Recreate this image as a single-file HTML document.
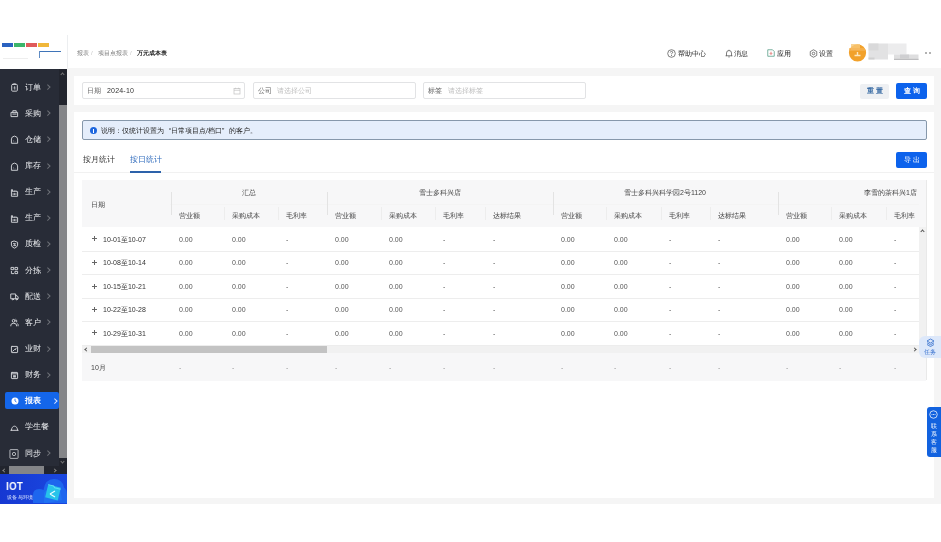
<!DOCTYPE html>
<html><head><meta charset="utf-8">
<style>
*{box-sizing:border-box;margin:0;padding:0}
html,body{width:941px;height:542px;overflow:hidden;background:#fff;font-family:"Liberation Sans",sans-serif;color:#333}
.t,.hi,.btn,.inp div{will-change:transform}
.a{position:absolute}
.t{position:absolute;white-space:nowrap;line-height:1}
#logo{left:0;top:35px;width:67px;height:33px;background:#fff}
.bar{position:absolute;top:8px;height:4px}
#hdr{left:67px;top:35px;width:874px;height:33px;background:#fff;border-left:1px solid #eceef0}
#side{left:0;top:68.5px;width:67px;height:405.5px;background:#282c37}
#main{left:67px;top:68px;width:874px;height:435.5px;background:#f5f5f5}
.card{position:absolute;background:#fff}
.inp{position:absolute;top:82px;height:16.5px;border:1px solid #e2e3e5;border-radius:2px;background:#fff}
.inp .lb{position:absolute;left:4px;top:4px;font-size:7px;color:#666;line-height:7px;white-space:nowrap}
.inp .ph{position:absolute;top:4px;font-size:7px;color:#bdbdbd;line-height:7px;white-space:nowrap}
.btn{position:absolute;border-radius:2px;font-size:7px;line-height:15px;text-align:center;letter-spacing:2px;text-indent:2px;white-space:nowrap;font-weight:bold}
.th{font-size:7px;color:#444;line-height:7px}
.td{font-size:7px;color:#555;line-height:7px}
.vl{position:absolute;width:1px;background:#e3e3e3}
.hl{position:absolute;height:1px;background:#ededed}
.hi{position:absolute;font-size:7px;line-height:7px;color:#222;white-space:nowrap}
.c{display:inline-block;width:1em;font-style:normal;text-align:center;text-indent:0;letter-spacing:0}.btn .c{margin-right:2px}
</style></head>
<body>
<!-- logo -->
<div id="logo" class="a">
  <div class="bar" style="left:2px;width:11px;background:#2a62c0"></div>
  <div class="bar" style="left:14px;width:11px;background:#3cb56a"></div>
  <div class="bar" style="left:26px;width:11px;background:#e05a5a"></div>
  <div class="bar" style="left:38px;width:11px;background:#f0b73a"></div>
  <div class="a" style="left:39px;top:16px;width:22px;height:1.3px;background:#3f74b8"></div>
  <div class="a" style="left:39px;top:16px;width:1px;height:7px;background:#5f8cc4"></div>
  <div class="a" style="left:3px;top:22.5px;width:25px;height:1px;background:#eeeeee"></div>
</div>
<!-- header -->
<div id="hdr" class="a">
  <div class="t" style="left:8.6px;top:15px;font-size:6px;color:#7a7a7a"><i class="c">报</i><i class="c">表</i></div>
  <div class="t" style="left:23px;top:15px;font-size:6px;color:#c4c4c4">/</div>
  <div class="t" style="left:29.5px;top:15px;font-size:6px;color:#7a7a7a"><i class="c">项</i><i class="c">目</i><i class="c">点</i><i class="c">报</i><i class="c">表</i></div>
  <div class="t" style="left:62px;top:15px;font-size:6px;color:#c4c4c4">/</div>
  <div class="t" style="left:68.5px;top:15px;font-size:6px;color:#1a1a1a;font-weight:bold"><i class="c">万</i><i class="c">元</i><i class="c">成</i><i class="c">本</i><i class="c">表</i></div>
  <!-- help -->
  <svg class="a" style="left:598.5px;top:13.8px" width="9" height="9" viewBox="0 0 18 18"><circle cx="9" cy="9" r="7.6" fill="none" stroke="#555" stroke-width="1.5"/><path d="M6.6 7 Q6.6 4.8 9 4.8 Q11.4 4.8 11.4 6.8 Q11.4 8.2 9.4 9 Q9 9.3 9 10.6" fill="none" stroke="#555" stroke-width="1.5"/><circle cx="9" cy="13" r="1" fill="#555"/></svg>
  <div class="hi" style="left:610px;top:14.5px"><i class="c">帮</i><i class="c">助</i><i class="c">中</i><i class="c">心</i></div>
  <svg class="a" style="left:656.5px;top:13.8px" width="8" height="9" viewBox="0 0 16 18"><path d="M3 13.5 V8 Q3 3 8 3 Q13 3 13 8 V13.5 H14.5 H1.5 Z" fill="none" stroke="#555" stroke-width="1.5" stroke-linejoin="round"/><path d="M8 1.5 V3 M6.5 15.8 H9.5" stroke="#555" stroke-width="1.5"/></svg>
  <div class="hi" style="left:666px;top:14.5px"><i class="c">消</i><i class="c">息</i></div>
  <svg class="a" style="left:698.8px;top:14px" width="8" height="8" viewBox="0 0 16 16"><path d="M1.5 1.5 H11 L14.5 5 V14.5 H1.5 Z" fill="none" stroke="#5a9f8a" stroke-width="1.6" stroke-linejoin="round"/><path d="M8 5.5 V10.5 M5.8 8.5 L8 10.8 L10.2 8.5" fill="none" stroke="#d9534f" stroke-width="1.5"/></svg>
  <div class="hi" style="left:709px;top:14.5px"><i class="c">应</i><i class="c">用</i></div>
  <svg class="a" style="left:740.5px;top:13.8px" width="9" height="9" viewBox="0 0 18 18"><path d="M9 1.5 L15.5 5.2 V12.8 L9 16.5 L2.5 12.8 V5.2 Z" fill="none" stroke="#555" stroke-width="1.5" stroke-linejoin="round"/><circle cx="9" cy="9" r="2.6" fill="none" stroke="#555" stroke-width="1.5"/></svg>
  <div class="hi" style="left:751px;top:14.5px"><i class="c">设</i><i class="c">置</i></div>
  <svg class="a" style="left:780px;top:8px" width="75" height="20" viewBox="0 0 75 20">
    <circle cx="9.5" cy="9.8" r="8.6" fill="#f2a12a"/>
    <rect x="3" y="1" width="9" height="6" fill="#f7c878" opacity=".8"/>
    <rect x="1" y="5" width="16" height="3" fill="#f5b455" opacity=".7"/>
    <path d="M6.5 12.5 H12.5 M9.5 9 V12.5" stroke="#fde7bd" stroke-width="1.4"/>
    <rect x="20.5" y="0.5" width="19.5" height="16" fill="#e2e2e3"/>
    <rect x="20.5" y="0.5" width="10" height="7" fill="#d9d9da"/>
    <rect x="40" y="0.5" width="18.5" height="11" fill="#ececed"/>
    <rect x="20.5" y="14.5" width="6" height="2" fill="#cfcfd0"/>
    <rect x="46" y="11.5" width="24.5" height="5.5" fill="#dededf"/>
    <rect x="52" y="11.5" width="9" height="4" fill="#cfcfd1"/>
    <rect x="46" y="15.8" width="24.5" height="1.2" fill="#bdbdbf"/>
  </svg>
  <div class="a" style="left:857px;top:17px;width:2px;height:2px;background:#999;border-radius:1px"></div>
  <div class="a" style="left:861px;top:17px;width:2px;height:2px;background:#999;border-radius:1px"></div>
</div>
<!-- sidebar -->
<div id="side" class="a">
  <div class="a" style="left:59px;top:0;width:8px;height:398px;background:#22252e"></div>
  <div class="a" style="left:59px;top:36.5px;width:8px;height:353px;background:#848588"></div>
  <div class="a" style="left:61px;top:4px;width:3px;height:3px;border-left:1px solid #777;border-top:1px solid #777;transform:rotate(45deg)"></div>
  <div class="a" style="left:61px;top:391px;width:3px;height:3px;border-right:1px solid #777;border-bottom:1px solid #777;transform:rotate(45deg)"></div>
  <div class="a" style="left:0;top:397.5px;width:67px;height:8px;background:#22252e"></div>
  <div class="a" style="left:9px;top:397.5px;width:35px;height:8px;background:#848588"></div>
  <div class="a" style="left:3px;top:400px;width:3px;height:3px;border-left:1px solid #888;border-bottom:1px solid #888;transform:rotate(45deg)"></div>
  <div class="a" style="left:53px;top:400px;width:3px;height:3px;border-right:1px solid #888;border-top:1px solid #888;transform:rotate(45deg)"></div>
</div>
<div class="a" style="left:0;top:68.5px;width:59px;height:397px;">
</div>
<svg class="a" style="left:9.7px;top:83.1px" width="9" height="9" viewBox="0 0 16 16"><rect x="3" y="2.5" width="10" height="12" rx="1.5" fill="none" stroke="#d2d4d8" stroke-width="1.7" stroke-linejoin="round" stroke-linecap="round"/><path d="M6 2.5 V1.5 H10 V2.5" fill="none" stroke="#d2d4d8" stroke-width="1.7" stroke-linejoin="round" stroke-linecap="round"/><path d="M7 8 L8.5 6.5 V11" fill="none" stroke="#d2d4d8" stroke-width="1.7" stroke-linejoin="round" stroke-linecap="round"/></svg>
<div class="t" style="left:25px;top:83.6px;font-size:8px;color:#ebedf0"><i class="c">订</i><i class="c">单</i></div>
<div class="a" style="left:46px;top:85.1px;width:3.5px;height:3.5px;border-right:1px solid #6e7178;border-top:1px solid #6e7178;transform:rotate(45deg)"></div>
<svg class="a" style="left:9.7px;top:109.2px" width="9" height="9" viewBox="0 0 16 16"><path d="M2.5 6 H13.5 V13.5 H2.5 Z" fill="none" stroke="#d2d4d8" stroke-width="1.7" stroke-linejoin="round" stroke-linecap="round"/><path d="M5 6 V3 H11 V6" fill="none" stroke="#d2d4d8" stroke-width="1.7" stroke-linejoin="round" stroke-linecap="round"/><path d="M5 9 H11" fill="none" stroke="#d2d4d8" stroke-width="1.7" stroke-linejoin="round" stroke-linecap="round"/></svg>
<div class="t" style="left:25px;top:109.7px;font-size:8px;color:#ebedf0"><i class="c">采</i><i class="c">购</i></div>
<div class="a" style="left:46px;top:111.2px;width:3.5px;height:3.5px;border-right:1px solid #6e7178;border-top:1px solid #6e7178;transform:rotate(45deg)"></div>
<svg class="a" style="left:9.7px;top:135.4px" width="9" height="9" viewBox="0 0 16 16"><path d="M2.5 14 V7 Q3 2.5 8 2 Q13 2.5 13.5 7 V14 Z" fill="none" stroke="#d2d4d8" stroke-width="1.7" stroke-linejoin="round" stroke-linecap="round"/><circle cx="6" cy="10" r=".6" fill="#c9ccd1"/><circle cx="6" cy="12" r=".6" fill="#c9ccd1"/><circle cx="9" cy="12" r=".6" fill="#c9ccd1"/></svg>
<div class="t" style="left:25px;top:135.9px;font-size:8px;color:#ebedf0"><i class="c">仓</i><i class="c">储</i></div>
<div class="a" style="left:46px;top:137.4px;width:3.5px;height:3.5px;border-right:1px solid #6e7178;border-top:1px solid #6e7178;transform:rotate(45deg)"></div>
<svg class="a" style="left:9.7px;top:161.5px" width="9" height="9" viewBox="0 0 16 16"><path d="M2.5 14 V7 Q3 2.5 8 2 Q13 2.5 13.5 7 V14 Z" fill="none" stroke="#d2d4d8" stroke-width="1.7" stroke-linejoin="round" stroke-linecap="round"/><circle cx="6" cy="10" r=".6" fill="#c9ccd1"/><circle cx="6" cy="12" r=".6" fill="#c9ccd1"/><circle cx="9" cy="12" r=".6" fill="#c9ccd1"/></svg>
<div class="t" style="left:25px;top:162.0px;font-size:8px;color:#ebedf0"><i class="c">库</i><i class="c">存</i></div>
<div class="a" style="left:46px;top:163.5px;width:3.5px;height:3.5px;border-right:1px solid #6e7178;border-top:1px solid #6e7178;transform:rotate(45deg)"></div>
<svg class="a" style="left:9.7px;top:187.7px" width="9" height="9" viewBox="0 0 16 16"><path d="M2.5 14 V3 H4.5 V6.5 L8 5 V6.5 L11 5 V6.5 H13.5 V14 Z" fill="none" stroke="#d2d4d8" stroke-width="1.7" stroke-linejoin="round" stroke-linecap="round"/><path d="M5.5 10 V11.5 M8 10 V11.5 M10.5 10 V11.5" fill="none" stroke="#d2d4d8" stroke-width="1.7" stroke-linejoin="round" stroke-linecap="round"/></svg>
<div class="t" style="left:25px;top:188.2px;font-size:8px;color:#ebedf0"><i class="c">生</i><i class="c">产</i></div>
<div class="a" style="left:46px;top:189.7px;width:3.5px;height:3.5px;border-right:1px solid #6e7178;border-top:1px solid #6e7178;transform:rotate(45deg)"></div>
<svg class="a" style="left:9.7px;top:213.8px" width="9" height="9" viewBox="0 0 16 16"><path d="M2.5 14 V3 H4.5 V6.5 L8 5 V6.5 L11 5 V6.5 H13.5 V14 Z" fill="none" stroke="#d2d4d8" stroke-width="1.7" stroke-linejoin="round" stroke-linecap="round"/><path d="M5.5 10 V11.5 M8 10 V11.5 M10.5 10 V11.5" fill="none" stroke="#d2d4d8" stroke-width="1.7" stroke-linejoin="round" stroke-linecap="round"/></svg>
<div class="t" style="left:25px;top:214.3px;font-size:8px;color:#ebedf0"><i class="c">生</i><i class="c">产</i></div>
<div class="a" style="left:46px;top:215.8px;width:3.5px;height:3.5px;border-right:1px solid #6e7178;border-top:1px solid #6e7178;transform:rotate(45deg)"></div>
<svg class="a" style="left:9.7px;top:239.9px" width="9" height="9" viewBox="0 0 16 16"><path d="M8 2 L13.5 4 V9 Q13 13 8 14.5 Q3 13 2.5 9 V4 Z" fill="none" stroke="#d2d4d8" stroke-width="1.7" stroke-linejoin="round" stroke-linecap="round"/><path d="M6 6.5 H10 L6.5 10 H10" fill="none" stroke="#d2d4d8" stroke-width="1.7" stroke-linejoin="round" stroke-linecap="round"/></svg>
<div class="t" style="left:25px;top:240.4px;font-size:8px;color:#ebedf0"><i class="c">质</i><i class="c">检</i></div>
<div class="a" style="left:46px;top:241.9px;width:3.5px;height:3.5px;border-right:1px solid #6e7178;border-top:1px solid #6e7178;transform:rotate(45deg)"></div>
<svg class="a" style="left:9.7px;top:266.1px" width="9" height="9" viewBox="0 0 16 16"><rect x="2.5" y="2.5" width="4" height="4" fill="none" stroke="#d2d4d8" stroke-width="1.7" stroke-linejoin="round" stroke-linecap="round"/><rect x="9.5" y="2.5" width="4" height="4" fill="none" stroke="#d2d4d8" stroke-width="1.7" stroke-linejoin="round" stroke-linecap="round"/><rect x="9.5" y="9.5" width="4" height="4" fill="none" stroke="#d2d4d8" stroke-width="1.7" stroke-linejoin="round" stroke-linecap="round"/><path d="M2.5 9.5 V13.5 H6.5" fill="none" stroke="#d2d4d8" stroke-width="1.7" stroke-linejoin="round" stroke-linecap="round"/></svg>
<div class="t" style="left:25px;top:266.6px;font-size:8px;color:#ebedf0"><i class="c">分</i><i class="c">拣</i></div>
<div class="a" style="left:46px;top:268.1px;width:3.5px;height:3.5px;border-right:1px solid #6e7178;border-top:1px solid #6e7178;transform:rotate(45deg)"></div>
<svg class="a" style="left:9.7px;top:292.2px" width="9" height="9" viewBox="0 0 16 16"><path d="M2 3.5 H10 V12 H2 Z" fill="none" stroke="#d2d4d8" stroke-width="1.7" stroke-linejoin="round" stroke-linecap="round"/><path d="M10 6.5 H12.5 L14.5 9 V12 H10" fill="none" stroke="#d2d4d8" stroke-width="1.7" stroke-linejoin="round" stroke-linecap="round"/><circle cx="5" cy="13" r="1" fill="none" stroke="#d2d4d8" stroke-width="1.7" stroke-linejoin="round" stroke-linecap="round"/><circle cx="12" cy="13" r="1" fill="none" stroke="#d2d4d8" stroke-width="1.7" stroke-linejoin="round" stroke-linecap="round"/></svg>
<div class="t" style="left:25px;top:292.7px;font-size:8px;color:#ebedf0"><i class="c">配</i><i class="c">送</i></div>
<div class="a" style="left:46px;top:294.2px;width:3.5px;height:3.5px;border-right:1px solid #6e7178;border-top:1px solid #6e7178;transform:rotate(45deg)"></div>
<svg class="a" style="left:9.7px;top:318.4px" width="9" height="9" viewBox="0 0 16 16"><circle cx="6.5" cy="5" r="2.5" fill="none" stroke="#d2d4d8" stroke-width="1.7" stroke-linejoin="round" stroke-linecap="round"/><path d="M1.5 14 V12.5 Q1.5 9.5 6.5 9.5 Q11.5 9.5 11.5 12.5 V14" fill="none" stroke="#d2d4d8" stroke-width="1.7" stroke-linejoin="round" stroke-linecap="round"/><path d="M10.5 2.5 Q13 3.5 12 7 M13.5 10 Q15 11 14.5 14" fill="none" stroke="#d2d4d8" stroke-width="1.7" stroke-linejoin="round" stroke-linecap="round"/></svg>
<div class="t" style="left:25px;top:318.9px;font-size:8px;color:#ebedf0"><i class="c">客</i><i class="c">户</i></div>
<div class="a" style="left:46px;top:320.4px;width:3.5px;height:3.5px;border-right:1px solid #6e7178;border-top:1px solid #6e7178;transform:rotate(45deg)"></div>
<svg class="a" style="left:9.7px;top:344.5px" width="9" height="9" viewBox="0 0 16 16"><rect x="2.5" y="2.5" width="11" height="11" rx="1" fill="none" stroke="#d2d4d8" stroke-width="1.7" stroke-linejoin="round" stroke-linecap="round"/><path d="M5 11 L8 8 L9 9 L11 5.5" fill="none" stroke="#d2d4d8" stroke-width="1.7" stroke-linejoin="round" stroke-linecap="round"/></svg>
<div class="t" style="left:25px;top:345.0px;font-size:8px;color:#ebedf0"><i class="c">业</i><i class="c">财</i></div>
<div class="a" style="left:46px;top:346.5px;width:3.5px;height:3.5px;border-right:1px solid #6e7178;border-top:1px solid #6e7178;transform:rotate(45deg)"></div>
<svg class="a" style="left:9.7px;top:370.6px" width="9" height="9" viewBox="0 0 16 16"><rect x="2.5" y="2.5" width="11" height="11" rx="1" fill="none" stroke="#d2d4d8" stroke-width="1.7" stroke-linejoin="round" stroke-linecap="round"/><path d="M2.5 5 H13.5" fill="none" stroke="#d2d4d8" stroke-width="1.7" stroke-linejoin="round" stroke-linecap="round"/><rect x="5.5" y="7.5" width="5" height="4" fill="#c9ccd1"/></svg>
<div class="t" style="left:25px;top:371.1px;font-size:8px;color:#ebedf0"><i class="c">财</i><i class="c">务</i></div>
<div class="a" style="left:46px;top:372.6px;width:3.5px;height:3.5px;border-right:1px solid #6e7178;border-top:1px solid #6e7178;transform:rotate(45deg)"></div>
<div class="a" style="left:4.5px;top:392.3px;width:54.5px;height:17px;background:#1466ea;border-radius:2px"></div>
<svg class="a" style="left:11px;top:397.3px" width="8" height="8" viewBox="0 0 16 16"><circle cx="8" cy="8" r="7" fill="#fff"/><path d="M8 3.5 V8 L11 10" stroke="#1466ea" stroke-width="1.6" fill="none"/></svg>
<div class="t" style="left:25px;top:397.3px;font-size:8px;color:#fff;font-weight:bold"><i class="c">报</i><i class="c">表</i></div>
<div class="a" style="left:53px;top:399.3px;width:3.5px;height:3.5px;border-right:1px solid #dfe8ff;border-top:1px solid #dfe8ff;transform:rotate(45deg)"></div>
<svg class="a" style="left:9.7px;top:422.9px" width="9" height="9" viewBox="0 0 16 16"><path d="M1.5 13 H14.5" fill="none" stroke="#d2d4d8" stroke-width="1.7" stroke-linejoin="round" stroke-linecap="round"/><path d="M2.5 13 C2.5 3, 13.5 3, 13.5 13" fill="none" stroke="#d2d4d8" stroke-width="1.7" stroke-linejoin="round" stroke-linecap="round"/></svg>
<div class="t" style="left:25px;top:423.4px;font-size:8px;color:#ebedf0"><i class="c">学</i><i class="c">生</i><i class="c">餐</i></div>
<svg class="a" style="left:9.2px;top:448.6px" width="10" height="10" viewBox="0 0 16 16"><rect x="1.5" y="1" width="13" height="14" rx=".8" fill="none" stroke="#d2d4d8" stroke-width="1.3"/><circle cx="8" cy="8" r="2.6" fill="none" stroke="#d2d4d8" stroke-width="1.3"/></svg>
<div class="t" style="left:25px;top:449.6px;font-size:8px;color:#ebedf0"><i class="c">同</i><i class="c">步</i></div>
<div class="a" style="left:46px;top:451.1px;width:3.5px;height:3.5px;border-right:1px solid #6e7178;border-top:1px solid #6e7178;transform:rotate(45deg)"></div>
<!-- IOT banner -->
<div class="a" style="left:0;top:474px;width:67px;height:29.5px;background:linear-gradient(90deg,#1638d2,#1a48e0);overflow:hidden">
  <svg class="a" style="left:0;top:0" width="67" height="29" viewBox="0 0 67 29">
    <path d="M33 29 V21 Q33 15 39 15 Q41.5 15 43.5 16 Q45 5 54 5 Q62.5 5 64 13.5 Q67 15.5 67 21 V29 Z" fill="#1e66ee"/>
    <path d="M44 19 Q46 15 50 16 L60 14 L62 26 L47 29 L44 29 Z" fill="#1f72f2"/>
    <g transform="rotate(14 53 18.5)"><rect x="46.5" y="12" width="13" height="13" fill="#27c3ea"/><path d="M46.5 12 H52 L53.5 13.5 H59.5" stroke="#5fe0f5" stroke-width="1" fill="none"/></g>
    <path d="M50 20 L55 17 M50 20 L55 23" stroke="#e8fbff" stroke-width="1.2"/>
  </svg>
  <div class="t" style="left:5.5px;top:7px;font-size:10.8px;font-weight:bold;color:#fff;letter-spacing:.2px;transform:scaleX(.92);transform-origin:0 0">IOT</div>
  <div class="t" style="left:6.5px;top:21px;font-size:5.3px;color:#dfe9ff"><i class="c">设</i><i class="c">备</i><i class="c">与</i><i class="c">环</i><i class="c">境</i></div>
</div>
<!-- main -->
<div id="main" class="a"></div>
<div class="card" style="left:74px;top:75.5px;width:860px;height:29px"></div>
<div class="card" style="left:74px;top:112px;width:860px;height:386px"></div>
<!-- filter inputs -->
<div class="inp" style="left:82px;width:163px">
  <div class="lb"><i class="c">日</i><i class="c">期</i></div>
  <div class="lb" style="left:23.5px;color:#333;letter-spacing:.2px">2024-10</div>
  <svg class="a" style="left:149.5px;top:3.5px" width="8" height="8" viewBox="0 0 16 16"><rect x="2" y="3" width="12" height="11" fill="none" stroke="#c4c4c4" stroke-width="1.5"/><path d="M2 6.5 H14 M5 1.5 V4 M11 1.5 V4" stroke="#c4c4c4" stroke-width="1.5"/></svg>
</div>
<div class="inp" style="left:252.5px;width:163px">
  <div class="lb"><i class="c">公</i><i class="c">司</i></div>
  <div class="ph" style="left:23px"><i class="c">请</i><i class="c">选</i><i class="c">择</i><i class="c">公</i><i class="c">司</i></div>
</div>
<div class="inp" style="left:422.5px;width:163px">
  <div class="lb"><i class="c">标</i><i class="c">签</i></div>
  <div class="ph" style="left:24px"><i class="c">请</i><i class="c">选</i><i class="c">择</i><i class="c">标</i><i class="c">签</i></div>
</div>
<div class="btn" style="left:859.5px;top:83.5px;width:29px;height:14.5px;background:#eef0f3;color:#3d6ea6;line-height:14.5px"><i class="c">重</i><i class="c">置</i></div>
<div class="btn" style="left:895.5px;top:82.5px;width:31px;height:15.5px;background:#0c62ec;color:#fff;line-height:15.5px"><i class="c">查</i><i class="c">询</i></div>
<!-- alert -->
<div class="a" style="left:82px;top:120px;width:845px;height:20px;background:#e5eefb;border:1px solid #8698ab;border-radius:2px"></div>
<div class="a" style="left:89.5px;top:127px;width:7px;height:7px;border-radius:50%;background:#1d66dd"></div>
<div class="a" style="left:92.5px;top:128.5px;width:1px;height:4px;background:#fff"></div>
<div class="t" style="left:100.5px;top:126.5px;font-size:7px;color:#222"><i class="c">说</i><i class="c">明</i><i class="c">：</i><i class="c">仅</i><i class="c">统</i><i class="c">计</i><i class="c">设</i><i class="c">置</i><i class="c">为</i><span style="display:inline-block;width:7px;text-align:right">“</span><i class="c">日</i><i class="c">常</i><i class="c">项</i><i class="c">目</i><i class="c">点</i>/<i class="c">档</i><i class="c">口</i><span style="display:inline-block;width:7px">”</span><i class="c">的</i><i class="c">客</i><i class="c">户</i><i class="c">。</i></div>
<!-- tabs -->
<div class="t" style="left:82.5px;top:156px;font-size:8px;color:#333"><i class="c">按</i><i class="c">月</i><i class="c">统</i><i class="c">计</i></div>
<div class="t" style="left:129.5px;top:156px;font-size:8px;color:#2f6bbd"><i class="c">按</i><i class="c">日</i><i class="c">统</i><i class="c">计</i></div>
<div class="a" style="left:74px;top:172px;width:860px;height:1px;background:#f1f1f1"></div>
<div class="a" style="left:129.5px;top:170.5px;width:31px;height:2px;background:#2d62aa"></div>
<div class="btn" style="left:896px;top:152px;width:31px;height:15.5px;background:#0c62ec;color:#fff;line-height:15.5px;font-weight:normal"><i class="c">导</i><i class="c">出</i></div>
<!-- table -->
<div class="a" style="left:82px;top:180px;width:845px;height:47px;background:#f7f7f8"></div>
<div class="a" style="left:170px;top:203.5px;width:749px;height:1px;background:#f4f4f4"></div>
<div class="t th" style="left:90.5px;top:200.5px"><i class="c">日</i><i class="c">期</i></div>
<div class="a" style="left:919px;top:227px;width:8px;height:118px;background:#f1f1f1"></div>
<div class="a" style="left:921px;top:230px;width:3px;height:3px;border-left:1px solid #555;border-top:1px solid #555;transform:rotate(45deg)"></div>
<div class="a" style="left:925.5px;top:180px;width:1px;height:200px;background:#e9e9e9"></div>
<!-- hscroll -->
<div class="a" style="left:82px;top:345px;width:845px;height:8px;background:#f1f1f1"></div>
<div class="a" style="left:90.5px;top:345px;width:236px;height:8px;background:#c3c3c3"></div>
<div class="a" style="left:85px;top:347.5px;width:3px;height:3px;border-left:1px solid #555;border-bottom:1px solid #555;transform:rotate(45deg)"></div>
<div class="a" style="left:913px;top:347.5px;width:3px;height:3px;border-right:1px solid #555;border-top:1px solid #555;transform:rotate(45deg)"></div>
<!-- summary -->
<div class="a" style="left:82px;top:353px;width:844px;height:27.5px;background:#f7f7f8"></div>
<div class="t td" style="left:90.5px;top:363.5px;color:#444">10<i class="c">月</i></div>
<div class="vl" style="left:170.6px;top:192px;height:23px"></div>
<div class="t th" style="left:148.7px;width:200px;text-align:center;top:188.5px"><i class="c">汇</i><i class="c">总</i></div>
<div class="t th" style="left:178.6px;top:212px"><i class="c">营</i><i class="c">业</i><i class="c">额</i></div>
<div class="t td" style="left:178.6px;top:235.5px">0.00</div>
<div class="t td" style="left:178.6px;top:259.0px">0.00</div>
<div class="t td" style="left:178.6px;top:282.5px">0.00</div>
<div class="t td" style="left:178.6px;top:306.0px">0.00</div>
<div class="t td" style="left:178.6px;top:329.5px">0.00</div>
<div class="t td" style="left:178.6px;top:363.5px;color:#999">-</div>
<div class="t th" style="left:232.3px;top:212px"><i class="c">采</i><i class="c">购</i><i class="c">成</i><i class="c">本</i></div>
<div class="vl" style="left:224.3px;top:207px;height:13px;background:#ededed"></div>
<div class="t td" style="left:232.3px;top:235.5px">0.00</div>
<div class="t td" style="left:232.3px;top:259.0px">0.00</div>
<div class="t td" style="left:232.3px;top:282.5px">0.00</div>
<div class="t td" style="left:232.3px;top:306.0px">0.00</div>
<div class="t td" style="left:232.3px;top:329.5px">0.00</div>
<div class="t td" style="left:232.3px;top:363.5px;color:#999">-</div>
<div class="t th" style="left:286.3px;top:212px"><i class="c">毛</i><i class="c">利</i><i class="c">率</i></div>
<div class="vl" style="left:278.3px;top:207px;height:13px;background:#ededed"></div>
<div class="t td" style="left:286.3px;top:235.5px">-</div>
<div class="t td" style="left:286.3px;top:259.0px">-</div>
<div class="t td" style="left:286.3px;top:282.5px">-</div>
<div class="t td" style="left:286.3px;top:306.0px">-</div>
<div class="t td" style="left:286.3px;top:329.5px">-</div>
<div class="t td" style="left:286.3px;top:363.5px;color:#999">-</div>
<div class="vl" style="left:327.3px;top:192px;height:23px"></div>
<div class="t th" style="left:340.0px;width:200px;text-align:center;top:188.5px"><i class="c">雪</i><i class="c">士</i><i class="c">多</i><i class="c">科</i><i class="c">兴</i><i class="c">店</i></div>
<div class="t th" style="left:334.8px;top:212px"><i class="c">营</i><i class="c">业</i><i class="c">额</i></div>
<div class="t td" style="left:334.8px;top:235.5px">0.00</div>
<div class="t td" style="left:334.8px;top:259.0px">0.00</div>
<div class="t td" style="left:334.8px;top:282.5px">0.00</div>
<div class="t td" style="left:334.8px;top:306.0px">0.00</div>
<div class="t td" style="left:334.8px;top:329.5px">0.00</div>
<div class="t td" style="left:334.8px;top:363.5px;color:#999">-</div>
<div class="t th" style="left:389.0px;top:212px"><i class="c">采</i><i class="c">购</i><i class="c">成</i><i class="c">本</i></div>
<div class="vl" style="left:381.0px;top:207px;height:13px;background:#ededed"></div>
<div class="t td" style="left:389.0px;top:235.5px">0.00</div>
<div class="t td" style="left:389.0px;top:259.0px">0.00</div>
<div class="t td" style="left:389.0px;top:282.5px">0.00</div>
<div class="t td" style="left:389.0px;top:306.0px">0.00</div>
<div class="t td" style="left:389.0px;top:329.5px">0.00</div>
<div class="t td" style="left:389.0px;top:363.5px;color:#999">-</div>
<div class="t th" style="left:443.0px;top:212px"><i class="c">毛</i><i class="c">利</i><i class="c">率</i></div>
<div class="vl" style="left:435.0px;top:207px;height:13px;background:#ededed"></div>
<div class="t td" style="left:443.0px;top:235.5px">-</div>
<div class="t td" style="left:443.0px;top:259.0px">-</div>
<div class="t td" style="left:443.0px;top:282.5px">-</div>
<div class="t td" style="left:443.0px;top:306.0px">-</div>
<div class="t td" style="left:443.0px;top:329.5px">-</div>
<div class="t td" style="left:443.0px;top:363.5px;color:#999">-</div>
<div class="t th" style="left:493.0px;top:212px"><i class="c">达</i><i class="c">标</i><i class="c">结</i><i class="c">果</i></div>
<div class="vl" style="left:485.0px;top:207px;height:13px;background:#ededed"></div>
<div class="t td" style="left:493.0px;top:235.5px">-</div>
<div class="t td" style="left:493.0px;top:259.0px">-</div>
<div class="t td" style="left:493.0px;top:282.5px">-</div>
<div class="t td" style="left:493.0px;top:306.0px">-</div>
<div class="t td" style="left:493.0px;top:329.5px">-</div>
<div class="t td" style="left:493.0px;top:363.5px;color:#999">-</div>
<div class="vl" style="left:552.8px;top:192px;height:23px"></div>
<div class="t th" style="left:565.0px;width:200px;text-align:center;top:188.5px"><i class="c">雪</i><i class="c">士</i><i class="c">多</i><i class="c">科</i><i class="c">兴</i><i class="c">科</i><i class="c">学</i><i class="c">园</i>2<i class="c">号</i>1120</div>
<div class="t th" style="left:560.5px;top:212px"><i class="c">营</i><i class="c">业</i><i class="c">额</i></div>
<div class="t td" style="left:560.5px;top:235.5px">0.00</div>
<div class="t td" style="left:560.5px;top:259.0px">0.00</div>
<div class="t td" style="left:560.5px;top:282.5px">0.00</div>
<div class="t td" style="left:560.5px;top:306.0px">0.00</div>
<div class="t td" style="left:560.5px;top:329.5px">0.00</div>
<div class="t td" style="left:560.5px;top:363.5px;color:#999">-</div>
<div class="t th" style="left:614.0px;top:212px"><i class="c">采</i><i class="c">购</i><i class="c">成</i><i class="c">本</i></div>
<div class="vl" style="left:606.0px;top:207px;height:13px;background:#ededed"></div>
<div class="t td" style="left:614.0px;top:235.5px">0.00</div>
<div class="t td" style="left:614.0px;top:259.0px">0.00</div>
<div class="t td" style="left:614.0px;top:282.5px">0.00</div>
<div class="t td" style="left:614.0px;top:306.0px">0.00</div>
<div class="t td" style="left:614.0px;top:329.5px">0.00</div>
<div class="t td" style="left:614.0px;top:363.5px;color:#999">-</div>
<div class="t th" style="left:669.0px;top:212px"><i class="c">毛</i><i class="c">利</i><i class="c">率</i></div>
<div class="vl" style="left:661.0px;top:207px;height:13px;background:#ededed"></div>
<div class="t td" style="left:669.0px;top:235.5px">-</div>
<div class="t td" style="left:669.0px;top:259.0px">-</div>
<div class="t td" style="left:669.0px;top:282.5px">-</div>
<div class="t td" style="left:669.0px;top:306.0px">-</div>
<div class="t td" style="left:669.0px;top:329.5px">-</div>
<div class="t td" style="left:669.0px;top:363.5px;color:#999">-</div>
<div class="t th" style="left:718.0px;top:212px"><i class="c">达</i><i class="c">标</i><i class="c">结</i><i class="c">果</i></div>
<div class="vl" style="left:710.0px;top:207px;height:13px;background:#ededed"></div>
<div class="t td" style="left:718.0px;top:235.5px">-</div>
<div class="t td" style="left:718.0px;top:259.0px">-</div>
<div class="t td" style="left:718.0px;top:282.5px">-</div>
<div class="t td" style="left:718.0px;top:306.0px">-</div>
<div class="t td" style="left:718.0px;top:329.5px">-</div>
<div class="t td" style="left:718.0px;top:363.5px;color:#999">-</div>
<div class="vl" style="left:778.4px;top:192px;height:23px"></div>
<div class="t th" style="left:716.7px;width:200px;text-align:right;top:188.5px"><i class="c">李</i><i class="c">雪</i><i class="c">的</i><i class="c">茶</i><i class="c">科</i><i class="c">兴</i>1<i class="c">店</i></div>
<div class="t th" style="left:785.5px;top:212px"><i class="c">营</i><i class="c">业</i><i class="c">额</i></div>
<div class="t td" style="left:785.5px;top:235.5px">0.00</div>
<div class="t td" style="left:785.5px;top:259.0px">0.00</div>
<div class="t td" style="left:785.5px;top:282.5px">0.00</div>
<div class="t td" style="left:785.5px;top:306.0px">0.00</div>
<div class="t td" style="left:785.5px;top:329.5px">0.00</div>
<div class="t td" style="left:785.5px;top:363.5px;color:#999">-</div>
<div class="t th" style="left:839.0px;top:212px"><i class="c">采</i><i class="c">购</i><i class="c">成</i><i class="c">本</i></div>
<div class="vl" style="left:831.0px;top:207px;height:13px;background:#ededed"></div>
<div class="t td" style="left:839.0px;top:235.5px">0.00</div>
<div class="t td" style="left:839.0px;top:259.0px">0.00</div>
<div class="t td" style="left:839.0px;top:282.5px">0.00</div>
<div class="t td" style="left:839.0px;top:306.0px">0.00</div>
<div class="t td" style="left:839.0px;top:329.5px">0.00</div>
<div class="t td" style="left:839.0px;top:363.5px;color:#999">-</div>
<div class="t th" style="left:894.0px;top:212px"><i class="c">毛</i><i class="c">利</i><i class="c">率</i></div>
<div class="vl" style="left:886.0px;top:207px;height:13px;background:#ededed"></div>
<div class="t td" style="left:894.0px;top:235.5px">-</div>
<div class="t td" style="left:894.0px;top:259.0px">-</div>
<div class="t td" style="left:894.0px;top:282.5px">-</div>
<div class="t td" style="left:894.0px;top:306.0px">-</div>
<div class="t td" style="left:894.0px;top:329.5px">-</div>
<div class="t td" style="left:894.0px;top:363.5px;color:#999">-</div>
<svg class="a" style="left:92px;top:236px" width="5" height="5" viewBox="0 0 5 5"><path d="M2.5 0 V5 M0 2.5 H5" stroke="#666" stroke-width="1"/></svg>
<div class="t td" style="left:103px;top:235.5px;color:#333">10-01<i class="c">至</i>10-07</div>
<div class="hl" style="left:82px;top:250.5px;width:837px"></div>
<svg class="a" style="left:92px;top:260px" width="5" height="5" viewBox="0 0 5 5"><path d="M2.5 0 V5 M0 2.5 H5" stroke="#666" stroke-width="1"/></svg>
<div class="t td" style="left:103px;top:259.0px;color:#333">10-08<i class="c">至</i>10-14</div>
<div class="hl" style="left:82px;top:274.0px;width:837px"></div>
<svg class="a" style="left:92px;top:284px" width="5" height="5" viewBox="0 0 5 5"><path d="M2.5 0 V5 M0 2.5 H5" stroke="#666" stroke-width="1"/></svg>
<div class="t td" style="left:103px;top:282.5px;color:#333">10-15<i class="c">至</i>10-21</div>
<div class="hl" style="left:82px;top:297.5px;width:837px"></div>
<svg class="a" style="left:92px;top:307px" width="5" height="5" viewBox="0 0 5 5"><path d="M2.5 0 V5 M0 2.5 H5" stroke="#666" stroke-width="1"/></svg>
<div class="t td" style="left:103px;top:306.0px;color:#333">10-22<i class="c">至</i>10-28</div>
<div class="hl" style="left:82px;top:321.0px;width:837px"></div>
<svg class="a" style="left:92px;top:330px" width="5" height="5" viewBox="0 0 5 5"><path d="M2.5 0 V5 M0 2.5 H5" stroke="#666" stroke-width="1"/></svg>
<div class="t td" style="left:103px;top:329.5px;color:#333">10-29<i class="c">至</i>10-31</div>
<div class="hl" style="left:82px;top:344.5px;width:837px"></div>
<!-- right floating -->
<div class="a" style="left:918.5px;top:336px;width:30px;height:22px;background:#dde8fa;border-radius:6px 0 0 6px"></div>
<svg class="a" style="left:926px;top:337.5px" width="9" height="9" viewBox="0 0 18 18"><path d="M9 2 L16 6 L9 10 L2 6 Z" fill="none" stroke="#2f6bcc" stroke-width="1.6" stroke-linejoin="round"/><path d="M2 9.5 L9 13.5 L16 9.5" fill="none" stroke="#2f6bcc" stroke-width="1.6" stroke-linejoin="round"/><path d="M2 13 L9 17 L16 13" fill="none" stroke="#2f6bcc" stroke-width="1.6" stroke-linejoin="round"/></svg>
<div class="t" style="left:923.5px;top:348.5px;font-size:6px;color:#2f6bcc"><i class="c">任</i><i class="c">务</i></div>
<div class="a" style="left:926.5px;top:406.5px;width:20px;height:50px;background:#1262df;border-radius:3px 0 0 3px"></div>
<svg class="a" style="left:929px;top:410px" width="9" height="9" viewBox="0 0 18 18"><circle cx="9" cy="9" r="7.5" fill="none" stroke="#fff" stroke-width="1.5"/><circle cx="6" cy="9" r="1" fill="#fff"/><circle cx="9" cy="9" r="1" fill="#fff"/><circle cx="12" cy="9" r="1" fill="#fff"/></svg>
<div class="t" style="left:930.5px;top:422px;font-size:6px;color:#fff;line-height:8px;white-space:normal;width:7px"><i class="c">联</i><i class="c">系</i><i class="c">客</i><i class="c">服</i></div>
</body></html>
